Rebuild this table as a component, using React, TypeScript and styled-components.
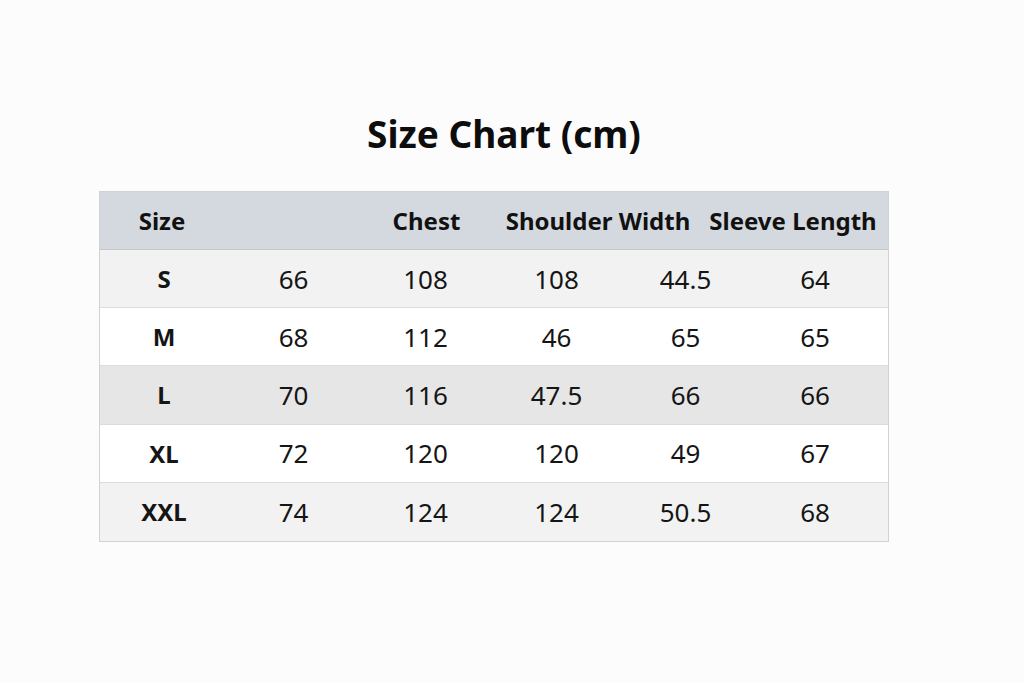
import styled, { createGlobalStyle } from "styled-components";

const GlobalStyle = createGlobalStyle`
  html, body {
    margin: 0;
    padding: 0;
    background: #fcfcfc;
    font-family: "Noto Sans", "Open Sans", sans-serif;
    color: #111;
  }
`;

const Page = styled.div`
  width: 1024px;
  height: 683px;
  padding: 108px 0 0 99px;
  box-sizing: border-box;
`;

const Sheet = styled.div`
  width: 790px;
  display: flex;
  flex-direction: column;
`;

const Title = styled.h1`
  margin: 0 0 31px 20px;
  text-align: center;
  font-size: 37px;
  font-weight: 700;
  line-height: 52px;
  color: #0d0d0d;
`;

const Table = styled.div`
  border: 1px solid #cfd2d6;
  box-sizing: border-box;
`;

const HeaderRow = styled.div`
  display: grid;
  grid-template-columns: 128px 131px 139px 204px 1fr;
  height: 57px;
  align-items: center;
  background: #d4d9df;
  border-bottom: 1px solid #c4c8cc;
`;

const HeadCell = styled.div`
  text-align: center;
  font-size: 24px;
  font-weight: 700;
  white-space: nowrap;
  color: #111;
  padding-right: 4px;
`;

const Row = styled.div<{ $bg: string }>`
  display: grid;
  grid-template-columns: 128px 131px 133px 129px 129px 1fr;
  height: 57.2px;
  align-items: center;
  background: ${(p) => p.$bg};
  border-bottom: 1px solid #dcdcdc;
  &:last-child {
    border-bottom: none;
    height: 58px;
  }
`;

const Cell = styled.div<{ $bold?: boolean }>`
  text-align: center;
  font-size: ${(p) => (p.$bold ? "24px" : "26px")};
  font-weight: ${(p) => (p.$bold ? 700 : 400)};
  color: #151515;
  &:last-child {
    padding-right: 8px;
  }
`;

const rows = [
  { bg: "#f2f2f2", cells: ["S", "66", "108", "108", "44.5", "64"] },
  { bg: "#ffffff", cells: ["M", "68", "112", "46", "65", "65"] },
  { bg: "#e6e6e6", cells: ["L", "70", "116", "47.5", "66", "66"] },
  { bg: "#ffffff", cells: ["XL", "72", "120", "120", "49", "67"] },
  { bg: "#f2f2f2", cells: ["XXL", "74", "124", "124", "50.5", "68"] },
];

export default function App() {
  return (
    <>
      <GlobalStyle />
      <Page>
        <Sheet>
          <Title>Size Chart (cm)</Title>
          <Table>
            <HeaderRow>
              <HeadCell>Size</HeadCell>
              <HeadCell />
              <HeadCell>Chest</HeadCell>
              <HeadCell>Shoulder Width</HeadCell>
              <HeadCell>Sleeve Length</HeadCell>
            </HeaderRow>
            {rows.map((r) => (
              <Row key={r.cells[0]} $bg={r.bg}>
                {r.cells.map((c, i) => (
                  <Cell key={i} $bold={i === 0}>
                    {c}
                  </Cell>
                ))}
              </Row>
            ))}
          </Table>
        </Sheet>
      </Page>
    </>
  );
}
